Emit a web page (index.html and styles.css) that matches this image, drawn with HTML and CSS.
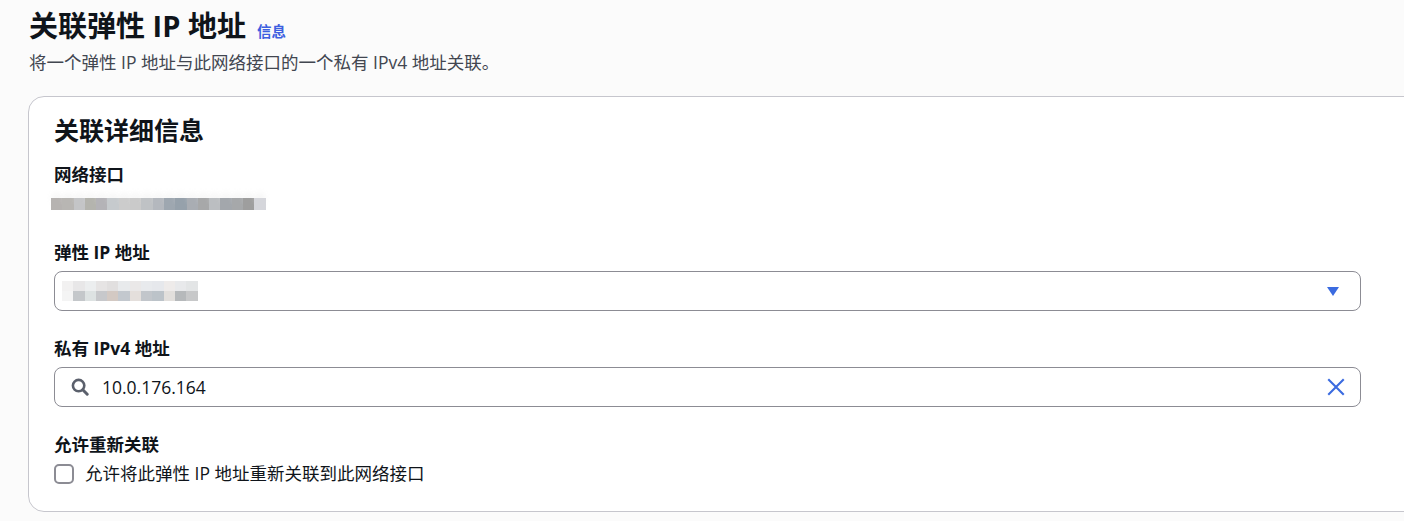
FILE: index.html
```html
<!DOCTYPE html>
<html lang="zh-CN">
<head>
<meta charset="utf-8">
<title>关联弹性 IP 地址</title>
<link rel="stylesheet" href="styles.css">
</head>
<body>
<div class="page">
  <header class="header">
    <div class="title-row">
      <h1 class="title">关联弹性 IP 地址</h1>
      <a class="info-link" href="#">信息</a>
    </div>
    <p class="subtitle">将一个弹性 IP 地址与此网络接口的一个私有 IPv4 地址关联。</p>
  </header>

  <section class="card">
    <h2 class="card-title">关联详细信息</h2>

    <div class="field">
      <div class="label label-tight">网络接口</div>
      <div class="mosaic mosaic-eni">
        <span style="background:#b6b3b1"></span><span style="background:#b8b6b3"></span><span style="background:#c4c5c7"></span><span style="background:#b4b4ae"></span><span style="background:#b4b3b7"></span><span style="background:#c6cacd"></span><span style="background:#cccccc"></span><span style="background:#cacaca"></span><span style="background:#bfc2c5"></span><span style="background:#b4b8be"></span><span style="background:#9ea7b0"></span><span style="background:#96a1ab"></span><span style="background:#a9adb3"></span><span style="background:#a7a8a9"></span><span style="background:#bbbec1"></span><span style="background:#a3a7ac"></span><span style="background:#a6a8aa"></span><span style="background:#9e9e9e"></span><span style="background:#d5d6db"></span>
      </div>
    </div>

    <div class="field">
      <div class="label">弹性 IP 地址</div>
      <div class="control select">
        <div class="mosaic mosaic-eip">
          <div class="mrow light"><span style="background:#f1eff0"></span><span style="background:#e6e4e5"></span><span style="background:#eaeced"></span><span style="background:#e3e1e1"></span><span style="background:#dedcdc"></span><span style="background:#e6e8ea"></span><span style="background:#e8e6e5"></span><span style="background:#e5e8eb"></span><span style="background:#e3e6ea"></span><span style="background:#ece9e8"></span><span style="background:#e5e7e9"></span><span style="background:#e0e2e3"></span></div>
          <div class="mrow"><span style="background:#f4f4f4"></span><span style="background:#c4c7ca"></span><span style="background:#dde2e2"></span><span style="background:#c7c8cb"></span><span style="background:#d3c9c3"></span><span style="background:#c3c8ce"></span><span style="background:#e4dfdc"></span><span style="background:#c2c6cb"></span><span style="background:#bcc3c9"></span><span style="background:#e2dfdc"></span><span style="background:#b6b9bb"></span><span style="background:#c7c8c9"></span></div>
        </div>
        <svg class="caret" width="12" height="9" viewBox="0 0 12 9" aria-hidden="true"><path d="M0 0 H12 L6 9 Z" fill="#3b6be0"/></svg>
      </div>
    </div>

    <div class="field">
      <div class="label">私有 IPv4 地址</div>
      <div class="control search">
        <svg class="search-icon" width="18" height="18" viewBox="0 0 18 18" aria-hidden="true"><circle cx="7.6" cy="7.6" r="5.7" fill="none" stroke="#5b606c" stroke-width="2.6"/><path d="M11.8 11.8 L16.2 16.2" stroke="#5b606c" stroke-width="3" stroke-linecap="round"/></svg>
        <span class="value">10.0.176.164</span>
        <svg class="clear-icon" width="18" height="18" viewBox="0 0 18 18" aria-hidden="true"><path d="M2 2 L16 16 M16 2 L2 16" stroke="#3b6be0" stroke-width="2.1" stroke-linecap="square"/></svg>
      </div>
    </div>

    <div class="field field-last">
      <div class="label label-check">允许重新关联</div>
      <label class="check">
        <span class="box"></span>
        <span class="check-text">允许将此弹性 IP 地址重新关联到此网络接口</span>
      </label>
    </div>
  </section>
</div>
</body>
</html>
```

FILE: styles.css
```css
html, body {
  margin: 0;
  padding: 0;
}
body {
  background: #fbfbfb;
  color: #0f141a;
  font-family: "Open Sans", "Noto Sans CJK SC", sans-serif;
  font-size: 17.5px;
  overflow: hidden;
}
.page {
  padding: 8px 0 0 28px;
}
.header {
  padding-left: 1px;
}
.title-row {
  display: flex;
  align-items: baseline;
  gap: 11px;
}
.title {
  margin: 0;
  font-size: 29px;
  line-height: 36px;
  font-weight: 700;
}
.info-link {
  color: #3d5fe0;
  font-size: 14.5px;
  font-weight: 700;
  text-decoration: none;
}
.subtitle {
  margin: 6px 0 0;
  color: #424650;
  font-size: 17.5px;
  line-height: 25px;
}
.card {
  margin-top: 21px;
  margin-right: -60px;
  background: #ffffff;
  border: 1px solid #c6c6cd;
  border-radius: 16px;
  padding: 18px 0 25px 25px;
}
.card-title {
  margin: 0 0 16px;
  font-size: 25px;
  line-height: 31px;
  font-weight: 700;
}
.field {
  width: 1307px;
  margin-bottom: 25px;
}
.field-last {
  margin-bottom: 0;
}
.label {
  font-weight: 700;
  font-size: 17.5px;
  line-height: 25px;
  margin-bottom: 6px;
}
.label-tight {
  margin-bottom: 5px;
}
.label-check {
  margin-bottom: 4px;
}
.mosaic {
  display: flex;
}
.mosaic span {
  display: block;
}
.mosaic-eni {
  margin-left: -3px;
  height: 23px;
  align-items: center;
}
.mosaic-eni span {
  width: 11.3px;
  height: 12px;
  box-shadow: 0 -6px 6px -2px rgba(235, 235, 235, 0.6);
}
.control {
  box-sizing: border-box;
  height: 40px;
  border: 1px solid #8c8c94;
  border-radius: 8px;
  background: #fff;
  display: flex;
  align-items: center;
}
.select {
  padding: 0 21px 0 7px;
  justify-content: space-between;
}
.mosaic-eip {
  flex-direction: column;
  filter: blur(0.4px);
}
.mrow {
  display: flex;
}
.mrow span {
  width: 11.3px;
  height: 10px;
}
.mrow.light span {
  opacity: 0.9;
}
.caret {
  display: block;
}
.search {
  padding: 0 15px 0 16px;
}
.search-icon {
  display: block;
  flex: none;
}
.value {
  margin-left: 13px;
  flex: 1;
  font-size: 17.5px;
  color: #0f141a;
}
.clear-icon {
  display: block;
  flex: none;
}
.check {
  display: flex;
  align-items: center;
  gap: 11px;
  height: 25px;
}
.box {
  box-sizing: border-box;
  width: 20px;
  height: 20px;
  border: 2px solid #8c8c94;
  border-radius: 5px;
  background: #fff;
  flex: none;
}
.check-text {
  font-size: 17.5px;
  line-height: 25px;
  color: #0f141a;
}
```
